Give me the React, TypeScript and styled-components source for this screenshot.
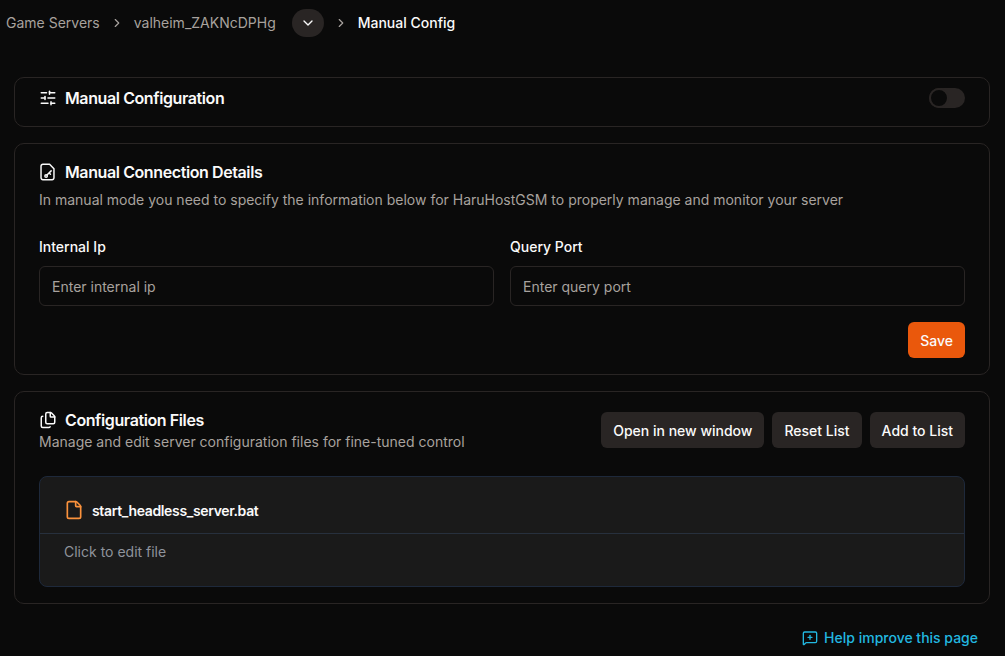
import React from 'react';
import styled, { createGlobalStyle } from 'styled-components';
import { ChevronDown, ChevronRight, File, Files, MessageSquarePlus, SlidersHorizontal } from 'lucide-react';

const GlobalStyle = createGlobalStyle`
  html, body {
    margin: 0;
    padding: 0;
    background: #0a0a0a;
    overflow: hidden;
  }
  body {
    font-family: Inter, "Liberation Sans", sans-serif;
    color: #fafafa;
  }
  * { box-sizing: border-box; }
`;

const Page = styled.div`
  width: 1005px;
  height: 656px;
  padding: 0 15px 0 14px;
  background: #0a0a0a;
`;

const Breadcrumbs = styled.nav`
  display: flex;
  align-items: center;
  height: 45px;
  margin-left: -8px;
  margin-bottom: 32px;
  font-size: 14px;
  color: #a1a1aa;
`;

const Crumb = styled.span<{ $current?: boolean }>`
  color: ${(p) => (p.$current ? '#fafafa' : '#a8a29e')};
  font-weight: ${(p) => (p.$current ? 500 : 400)};
`;

const Separator = styled.span`
  display: flex;
  width: 34px;
  justify-content: center;
  color: #a8a29e;
`;

const RoundButton = styled.button`
  display: flex;
  align-items: center;
  justify-content: center;
  width: 32px;
  height: 28px;
  margin-left: 16px;
  padding: 0;
  border: none;
  border-radius: 14px;
  background: #292524;
  color: #fafafa;
`;

const Stack = styled.div`
  display: flex;
  flex-direction: column;
  gap: 16px;
`;

const Card = styled.section`
  border: 1px solid #292524;
  border-radius: 10px;
  background: #0a0a0a;
`;

const ToggleCard = styled(Card)`
  display: flex;
  align-items: center;
  justify-content: space-between;
  height: 50px;
  padding: 0 24px 8px;
`;

const DetailsCard = styled(Card)`
  height: 232px;
  padding: 18px 24px 16px;
`;

const FilesCard = styled(Card)`
  height: 213px;
  padding: 18px 24px 16px;
`;

const TitleRow = styled.div`
  display: flex;
  align-items: center;
  gap: 8px;
  height: 20px;
`;

const Title = styled.h2`
  margin: 0;
  font-size: 16px;
  line-height: 20px;
  font-weight: 600;
  letter-spacing: -0.4px;
  color: #fafafa;
`;

const Description = styled.p`
  margin: 8px 0 0;
  font-size: 14px;
  line-height: 20px;
  color: #a8a29e;
`;

const Toggle = styled.div`
  display: flex;
  align-items: center;
  width: 36px;
  height: 20px;
  border-radius: 10px;
  background: #292524;
`;

const Thumb = styled.span`
  width: 20px;
  height: 20px;
  border-radius: 50%;
  background: #0a0a0a;
  border: 2px solid #292524;
`;

const FieldGrid = styled.div`
  display: grid;
  grid-template-columns: 1fr 1fr;
  gap: 16px;
  margin-top: 27px;
`;

const Field = styled.div`
  display: flex;
  flex-direction: column;
  gap: 9px;
`;

const Label = styled.label`
  font-size: 14px;
  line-height: 20px;
  font-weight: 500;
  color: #fafafa;
`;

const Input = styled.input`
  height: 40px;
  padding: 0 12px;
  border: 1px solid #292524;
  border-radius: 6px;
  background: transparent;
  font-family: inherit;
  font-size: 14px;
  color: #fafafa;
  &::placeholder {
    color: #a8a29e;
    opacity: 1;
  }
`;

const Actions = styled.div`
  display: flex;
  justify-content: flex-end;
  margin-top: 16px;
`;

const Button = styled.button<{ $primary?: boolean }>`
  height: 36px;
  padding: 0 12px;
  border: none;
  border-radius: 6px;
  background: ${(p) => (p.$primary ? '#ea580c' : '#292524')};
  font-family: inherit;
  font-size: 14px;
  font-weight: 500;
  color: #fafafa;
`;

const FilesHeader = styled.div`
  display: flex;
  justify-content: space-between;
  align-items: flex-start;
`;

const ButtonRow = styled.div`
  display: flex;
  gap: 8px;
  margin-top: 2px;
`;

const FilesDescription = styled(Description)`
  margin-top: 2px;
`;

const FileBox = styled.div`
  height: 111px;
  margin-top: 24px;
  border: 1px solid #1e293b;
  border-radius: 8px;
  background: #1a1a1a;
`;

const FileHead = styled.div`
  display: flex;
  align-items: center;
  gap: 8px;
  height: 57px;
  padding: 10px 24px 0;
  border-bottom: 1px solid #27303d;
  color: #fb923c;
`;

const FileName = styled.span`
  font-size: 14px;
  font-weight: 600;
  letter-spacing: -0.35px;
  color: #fafafa;
`;

const FileHint = styled.div`
  padding: 8px 24px;
  font-size: 14px;
  line-height: 20px;
  color: #8f939b;
`;

const Footer = styled.div`
  display: flex;
  justify-content: flex-end;
  margin-top: 24px;
  padding-right: 12px;
`;

const HelpLink = styled.a`
  display: flex;
  align-items: center;
  gap: 6px;
  font-size: 14px;
  line-height: 20px;
  font-weight: 500;
  color: #22b8e0;
`;

const FileKeyIcon = () => (
  <svg width="18" height="18" viewBox="0 0 16 16" fill="none" stroke="currentColor" strokeWidth="1.3" strokeLinecap="round" strokeLinejoin="round">
    <path d="M3.4 1.2h6l3.9 4v8a1.6 1.6 0 0 1-1.6 1.6H3.4a1.6 1.6 0 0 1-1.6-1.6V2.8a1.6 1.6 0 0 1 1.6-1.6z" />
    <circle cx="6.3" cy="11.5" r="1.1" />
    <path d="M7.1 10.7l3.7-3.7M9 8.8l1.2 1.2" />
  </svg>
);

const App = () => (
  <Page>
    <GlobalStyle />
    <Breadcrumbs>
      <Crumb>Game Servers</Crumb>
      <Separator>
        <ChevronRight size={14} />
      </Separator>
      <Crumb>valheim_ZAKNcDPHg</Crumb>
      <RoundButton>
        <ChevronDown size={16} />
      </RoundButton>
      <Separator>
        <ChevronRight size={14} />
      </Separator>
      <Crumb $current>Manual Config</Crumb>
    </Breadcrumbs>
    <Stack>
      <ToggleCard>
        <TitleRow>
          <SlidersHorizontal size={18} />
          <Title>Manual Configuration</Title>
        </TitleRow>
        <Toggle>
          <Thumb />
        </Toggle>
      </ToggleCard>
      <DetailsCard>
        <TitleRow>
          <FileKeyIcon />
          <Title>Manual Connection Details</Title>
        </TitleRow>
        <Description>
          In manual mode you need to specify the information below for HaruHostGSM to properly manage and monitor your server
        </Description>
        <FieldGrid>
          <Field>
            <Label>Internal Ip</Label>
            <Input placeholder="Enter internal ip" />
          </Field>
          <Field>
            <Label>Query Port</Label>
            <Input placeholder="Enter query port" />
          </Field>
        </FieldGrid>
        <Actions>
          <Button $primary>Save</Button>
        </Actions>
      </DetailsCard>
      <FilesCard>
        <FilesHeader>
          <div>
            <TitleRow>
              <Files size={18} />
              <Title>Configuration Files</Title>
            </TitleRow>
            <FilesDescription>Manage and edit server configuration files for fine-tuned control</FilesDescription>
          </div>
          <ButtonRow>
            <Button>Open in new window</Button>
            <Button>Reset List</Button>
            <Button>Add to List</Button>
          </ButtonRow>
        </FilesHeader>
        <FileBox>
          <FileHead>
            <File size={20} />
            <FileName>start_headless_server.bat</FileName>
          </FileHead>
          <FileHint>Click to edit file</FileHint>
        </FileBox>
      </FilesCard>
    </Stack>
    <Footer>
      <HelpLink>
        <MessageSquarePlus size={16} />
        Help improve this page
      </HelpLink>
    </Footer>
  </Page>
);

export default App;
